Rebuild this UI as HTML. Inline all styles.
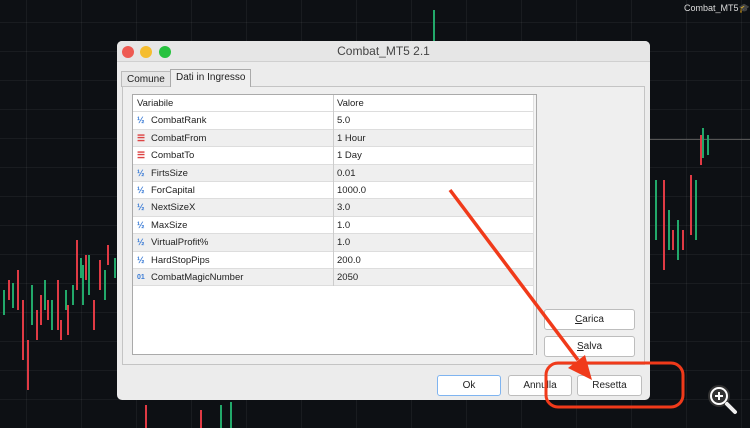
<!DOCTYPE html>
<html><head><meta charset="utf-8"><style>
*{margin:0;padding:0;box-sizing:border-box}
body{width:750px;height:428px;overflow:hidden;background:#0d1014;font-family:"Liberation Sans",sans-serif;position:relative}
.grid{position:absolute;inset:0;background-image:repeating-linear-gradient(90deg,transparent 0 26px,rgba(255,255,255,.05) 26px 27px,transparent 27px 55px),repeating-linear-gradient(0deg,transparent 0 28px,rgba(255,255,255,.05) 28px 29px);}
.dlg{position:absolute;left:117px;top:41px;width:533px;height:359px;background:#ececec;border-radius:5px;overflow:hidden}
.title{height:21px;background:#e6e6e6;border-bottom:1px solid #d0d0d0;text-align:center;font-size:12px;color:#444;line-height:21px}
.dot{position:absolute;top:5px;width:12px;height:12px;border-radius:50%}
.tab{position:absolute;font-size:10px;color:#222;height:17px;line-height:16px;padding:0 5px;border:1px solid #bbb;border-bottom:none;background:#e6e6e6}
.pane{position:absolute;left:5px;top:45px;width:523px;height:279px;border:1px solid #c4c4c4;background:#efefef}
.tbl{position:absolute;left:15px;top:53px;width:405px;height:261px;background:#fff;border:1px solid #aaa}
.row{height:17.4px;font-size:9.5px;color:#222;line-height:17.4px;position:relative;border-bottom:1px solid #ddd}
.row.alt{background:#efefef}
.row span{position:absolute}
.c1{left:18px}.c2{left:204px}
.ic{left:4px;font-size:9px;color:#3a7bd5;font-weight:bold}
.btn{position:absolute;background:#fff;border:1px solid #bdbdbd;border-radius:3px;font-size:10px;color:#222;text-align:center;line-height:19px;height:21px}
</style></head><body>
<div class="grid"></div>
<div style="position:absolute;left:650px;top:139px;width:100px;height:1px;background:#555"></div>
<div style="position:absolute;left:684px;top:3px;font-size:9px;color:#ddd">Combat_MT5<span style="color:#4aa3ff">🎓</span></div>
<svg style="position:absolute;left:0;top:0" width="750" height="428">
<g fill="#e03a44">
<rect x="8" y="280" width="2" height="20"/><rect x="17" y="270" width="2" height="40"/><rect x="22" y="300" width="2" height="60"/><rect x="27" y="340" width="2" height="50"/><rect x="36" y="310" width="2" height="30"/><rect x="40" y="295" width="2" height="30"/><rect x="47" y="300" width="2" height="20"/><rect x="57" y="280" width="2" height="50"/><rect x="60" y="320" width="2" height="20"/><rect x="67" y="305" width="2" height="30"/><rect x="76" y="240" width="2" height="50"/><rect x="85" y="255" width="2" height="25"/><rect x="93" y="300" width="2" height="30"/><rect x="99" y="260" width="2" height="30"/><rect x="107" y="245" width="2" height="20"/><rect x="663" y="180" width="2" height="90"/><rect x="672" y="230" width="2" height="20"/><rect x="682" y="230" width="2" height="20"/><rect x="690" y="175" width="2" height="60"/><rect x="700" y="135" width="2" height="30"/><rect x="145" y="405" width="2" height="23"/><rect x="200" y="410" width="2" height="18"/>
</g>
<g fill="#22a86a">
<rect x="3" y="290" width="2" height="25"/><rect x="12" y="283" width="2" height="25"/><rect x="31" y="285" width="2" height="40"/><rect x="44" y="280" width="2" height="30"/><rect x="51" y="300" width="2" height="30"/><rect x="65" y="290" width="2" height="20"/><rect x="72" y="285" width="2" height="20"/><rect x="80" y="258" width="2" height="20"/><rect x="82" y="265" width="2" height="40"/><rect x="88" y="255" width="2" height="40"/><rect x="104" y="270" width="2" height="30"/><rect x="114" y="258" width="2" height="20"/><rect x="655" y="180" width="2" height="60"/><rect x="668" y="210" width="2" height="40"/><rect x="677" y="220" width="2" height="40"/><rect x="695" y="180" width="2" height="60"/><rect x="702" y="128" width="2" height="30"/><rect x="707" y="135" width="2" height="20"/><rect x="433" y="10" width="2" height="31"/><rect x="220" y="405" width="2" height="23"/><rect x="230" y="402" width="2" height="26"/>
</g>
</svg>
<div class="dlg">
<div class="title">Combat_MT5 2.1</div>
<div class="dot" style="left:5px;background:#ee5a52"></div><div class="dot" style="left:23px;background:#f5bd2f"></div><div class="dot" style="left:42px;background:#27c23f"></div>
<div class="tab" style="left:4px;height:16px;top:30px">Comune</div>
<div class="tab" style="left:53px;top:28px;background:#efefef;border-color:#aaa;height:18px;z-index:2">Dati in Ingresso</div>
<div class="pane"></div>
<div class="tbl">
<div class="row" style="background:#fff"><span class="c1" style="left:4px">Variabile</span><span class="c2">Valore</span></div>
<div class="row"><span class="ic">½</span><span class="c1">CombatRank</span><span class="c2">5.0</span></div>
<div class="row alt"><span class="ic" style="color:#d44">☰</span><span class="c1">CombatFrom</span><span class="c2">1 Hour</span></div>
<div class="row"><span class="ic" style="color:#d44">☰</span><span class="c1">CombatTo</span><span class="c2">1 Day</span></div>
<div class="row alt"><span class="ic">½</span><span class="c1">FirtsSize</span><span class="c2">0.01</span></div>
<div class="row"><span class="ic">½</span><span class="c1">ForCapital</span><span class="c2">1000.0</span></div>
<div class="row alt"><span class="ic">½</span><span class="c1">NextSizeX</span><span class="c2">3.0</span></div>
<div class="row"><span class="ic">½</span><span class="c1">MaxSize</span><span class="c2">1.0</span></div>
<div class="row alt"><span class="ic">½</span><span class="c1">VirtualProfit%</span><span class="c2">1.0</span></div>
<div class="row"><span class="ic">½</span><span class="c1">HardStopPips</span><span class="c2">200.0</span></div>
<div class="row alt"><span class="ic" style="font-size:7px">01</span><span class="c1">CombatMagicNumber</span><span class="c2">2050</span></div>
<div style="position:absolute;left:200px;top:0;width:1px;height:191px;background:#ccc"></div>
<div style="position:absolute;right:0;top:0;width:3px;height:260px;background:#f4f4f4;border-left:1px solid #e0e0e0"></div>
</div>
<div class="btn" style="left:427px;top:268px;width:91px"><u>C</u>arica</div>
<div class="btn" style="left:427px;top:295px;width:91px"><u>S</u>alva</div>
<div class="btn" style="left:320px;top:334px;width:64px;border-color:#7fb4f0">Ok</div>
<div class="btn" style="left:391px;top:334px;width:64px">Annulla</div>
<div class="btn" style="left:460px;top:334px;width:65px">Resetta</div>
</div>
<svg style="position:absolute;left:0;top:0" width="750" height="428">
<rect x="546" y="363" width="137" height="44" rx="12" fill="none" stroke="#f03a1a" stroke-width="3"/>
<line x1="450" y1="190" x2="578" y2="360" stroke="#f03a1a" stroke-width="3.5"/>
<polygon points="592,380 568,368 585,355" fill="#f03a1a"/>
<circle cx="719" cy="396" r="10" fill="#fff" stroke="#333" stroke-width="2"/>
<circle cx="719" cy="396" r="7" fill="#333"/>
<path d="M715 396h8M719 392v8" stroke="#fff" stroke-width="2"/>
<line x1="727" y1="404" x2="735" y2="412" stroke="#eee" stroke-width="4" stroke-linecap="round"/>
</svg>
</body></html>
